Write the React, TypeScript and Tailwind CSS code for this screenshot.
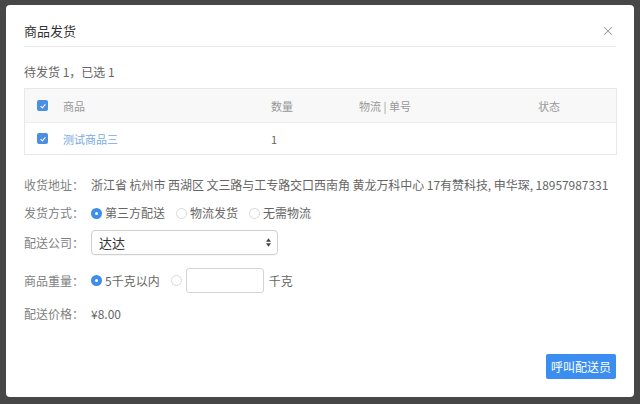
import { X } from "lucide-react";

const font = { fontFamily: '"Noto Sans CJK SC", "Noto Sans", sans-serif' };

function Check() {
  return (
    <span className="flex h-[11px] w-[11px] items-center justify-center rounded-[2px] bg-[#4a8fe3]">
      <svg viewBox="0 0 10 10" className="h-[8px] w-[8px]">
        <path d="M2 5.2 L4.2 7.3 L8 2.8" fill="none" stroke="#fff" strokeWidth="1.4" />
      </svg>
    </span>
  );
}

function Radio({ on }: { on?: boolean }) {
  return on ? (
    <span className="flex h-[11px] w-[11px] shrink-0 items-center justify-center rounded-full bg-[#3d8ee8]">
      <span className="h-[3px] w-[3px] rounded-full bg-white" />
    </span>
  ) : (
    <span className="block h-[11px] w-[11px] shrink-0 rounded-full border border-[#d9d9d9] bg-white" />
  );
}

function Row({ label, className, children }: { label: string; className?: string; children: React.ReactNode }) {
  return (
    <div className={"flex items-center " + (className ?? "")}>
      <span className="w-[67px] shrink-0 text-[#808080]">{label}</span>
      {children}
    </div>
  );
}

export default function App() {
  return (
    <div className="h-[404px] w-[640px] bg-[#474747] pt-[5px] px-[6px]" style={font}>
      <div className="flex h-[392px] flex-col rounded-[4px] bg-white px-[18px] text-[12px] leading-[18px] text-[#555]">
        <div className="flex items-center justify-between border-b border-[#ececec] pt-[17px] pb-[6px]">
          <span className="text-[13px] text-[#333]">商品发货</span>
          <X className="mr-[1px] h-[14px] w-[14px] text-[#999]" strokeWidth={1.8} />
        </div>

        <div className="mt-[16px] text-[#666]">待发货 1，已选 1</div>

        <div className="mt-[7px] mr-[-1px] border border-[#e8e8e8]">
          <div className="grid h-[33px] grid-cols-[38px_208px_88px_179px_1fr] items-center bg-[#f8f8f8] text-[11px] text-[#999]">
            <span className="pl-[12px]"><Check /></span>
            <span>商品</span>
            <span>数量</span>
            <span>物流 | 单号</span>
            <span>状态</span>
          </div>
          <div className="grid h-[32px] grid-cols-[38px_208px_88px_179px_1fr] items-center border-t border-[#eee] text-[11px]">
            <span className="pl-[12px]"><Check /></span>
            <span className="text-[#7aaae3]">测试商品三</span>
            <span className="text-[#666]">1</span>
            <span />
            <span />
          </div>
        </div>

        <Row label="收货地址：" className="mt-[21px]">
          <span className="whitespace-nowrap tracking-[-0.05px] text-[#666]">
            浙江省 杭州市 西湖区 文三路与工专路交口西南角 黄龙万科中心 17有赞科技, 申华琛, 18957987331
          </span>
        </Row>

        <Row label="发货方式：" className="mt-[10px]">
          <div className="flex items-center gap-[11px] text-[#666]">
            <span className="flex items-center gap-[3px]"><Radio on />第三方配送</span>
            <span className="flex items-center gap-[3px]"><Radio />物流发货</span>
            <span className="flex items-center gap-[3px]"><Radio />无需物流</span>
          </div>
        </Row>

        <Row label="配送公司：" className="mt-[8px]">
          <div className="flex h-[25px] w-[187px] items-center justify-between rounded-[4px] border border-[#cfcfcf] pl-[7px] pr-[6px] text-[13px] text-[#333] shadow-[0_1px_1px_rgba(0,0,0,0.04)]">
            <span>达达</span>
            <svg viewBox="0 0 6 10" className="h-[9px] w-[5px]">
              <path d="M0 4 L3 0 L6 4 Z M0 6 L3 10 L6 6 Z" fill="#444" />
            </svg>
          </div>
        </Row>

        <Row label="商品重量：" className="mt-[13px]">
          <span className="flex items-center gap-[3px] text-[#666]"><Radio on />5千克以内</span>
          <span className="ml-[11px] block"><Radio /></span>
          <span className="ml-[4px] block h-[25px] w-[78px] rounded-[3px] border border-[#d4d4d4]" />
          <span className="ml-[5px] text-[#666]">千克</span>
        </Row>

        <Row label="配送价格：" className="mt-[12px]">
          <span className="text-[#666]">¥8.00</span>
        </Row>

        <div className="mt-auto mb-[18px] flex justify-end">
          <button className="h-[25px] w-[70px] rounded-[2px] bg-[#3b8ef0] text-[12px] text-white">呼叫配送员</button>
        </div>
      </div>
    </div>
  );
}
